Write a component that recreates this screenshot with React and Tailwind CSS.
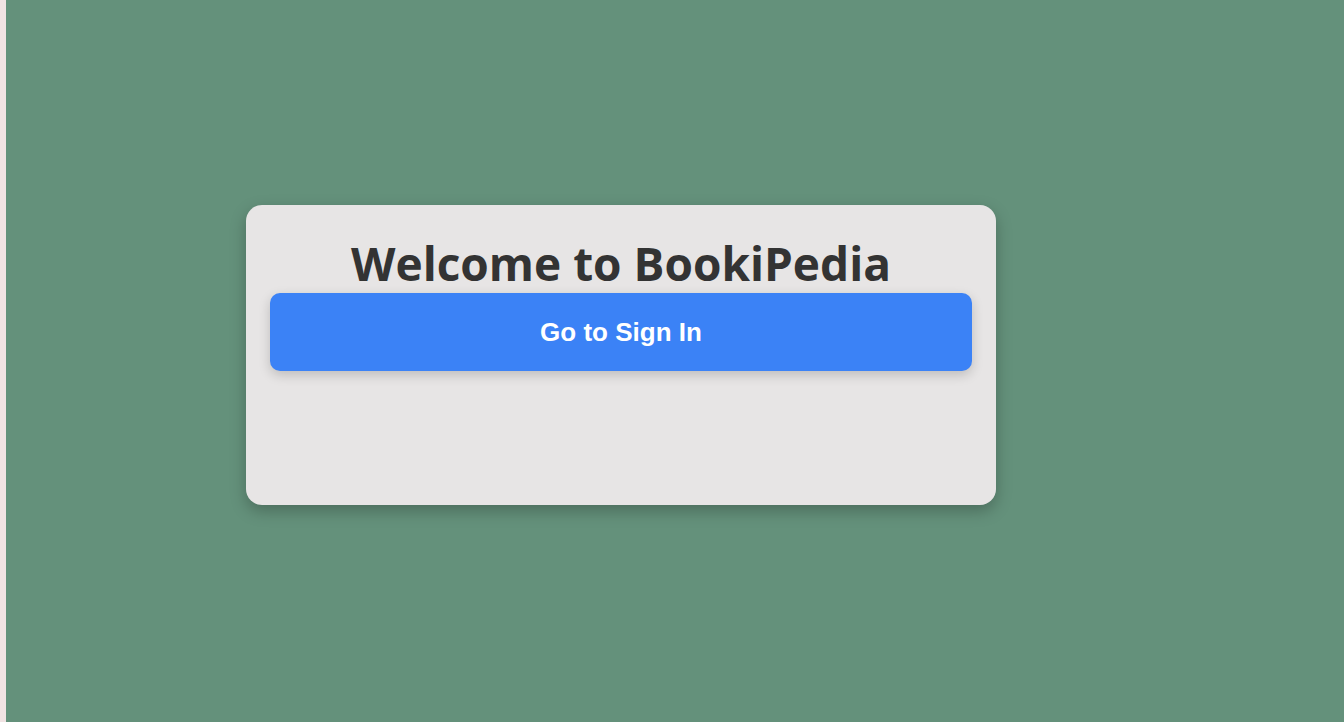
export default function App() {
  return (
    <div className="flex min-h-[722px] w-full bg-[#f1e3e3]">
      <div className="ml-[6px] flex-1 bg-[#64917b] pt-[205px] pl-[240px]">
        {/* Welcome card */}
        <div className="w-[750px] h-[300px] rounded-2xl bg-[#e7e5e5] px-6 pt-[28px] shadow-[0_6px_16px_rgba(0,0,0,0.25)]">
          <h1
            className="text-center text-[46px] leading-[60px] font-bold text-[#333333]"
            style={{ fontFamily: '"Open Sans", "Noto Sans", sans-serif' }}
          >
            Welcome to BookiPedia
          </h1>
          <button
            className="w-full h-[78px] rounded-[10px] bg-[#3b82f6] text-white text-[26px] font-bold shadow-[0_4px_12px_rgba(0,0,0,0.18)]"
            style={{ fontFamily: '"Liberation Sans", Arial, sans-serif' }}
          >
            Go to Sign In
          </button>
        </div>
      </div>
    </div>
  )
}
